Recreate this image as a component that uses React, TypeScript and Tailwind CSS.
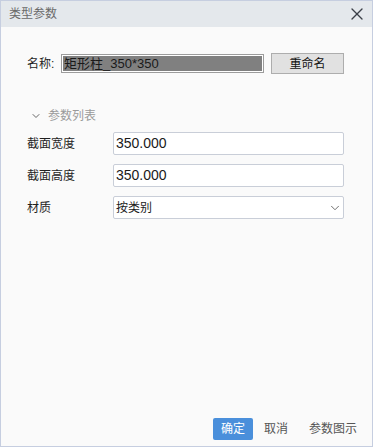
import { ChevronDown, X } from 'lucide-react';

const font = { fontFamily: '"Liberation Sans", "Noto Sans CJK SC", sans-serif' };

function ParamRow({ label, children }: { label: string; children: React.ReactNode }) {
  return (
    <div className="flex items-center h-[23px]">
      <span className="w-[86px] text-[12px] text-[#1f1f1f]">{label}</span>
      {children}
    </div>
  );
}

export default function App() {
  return (
    <div
      className="w-[373px] h-[447px] border border-[#c6cee0] bg-[#fafafa] flex flex-col"
      style={font}
    >
      <div className="h-[26px] bg-[#e4e8ec] flex items-center justify-between pl-[8px] pr-[5px]">
        <span className="text-[12px] text-[#6a6a6a]">类型参数</span>
        <X className="w-[20px] h-[20px] text-[#3a3f47]" strokeWidth={1.6} />
      </div>

      <div className="flex-1 flex flex-col pl-[26px] pr-[28px] pt-[26px]">
        <div className="flex items-center h-[21px]">
          <span className="w-[34px] text-[12px] text-[#1f1f1f]">名称:</span>
          <div className="w-[203px] h-[19px] border border-[#9c9c9c] bg-white p-px">
            <div className="h-full bg-[#808080] text-[13px] leading-[15px] text-[#1a1a1a] pl-[1px]">
              矩形柱_350*350
            </div>
          </div>
          <button className="ml-[7px] w-[73px] h-[21px] border border-[#adadad] bg-[#e1e1e1] text-[12px] text-[#111]">
            重命名
          </button>
        </div>

        <div className="flex items-center mt-[35px] h-[14px] pl-[3px] gap-[6px]">
          <ChevronDown className="w-[12px] h-[12px] text-[#666]" strokeWidth={2} />
          <span className="text-[12px] text-[#9a9a9a]">参数列表</span>
        </div>

        <div className="flex flex-col gap-[9px] mt-[9px]">
          <ParamRow label="截面宽度">
            <div className="flex-1 h-full border border-[#c9ced8] rounded-[2px] bg-white text-[14px] text-[#1a1a1a] pl-[2px] flex items-center">
              350.000
            </div>
          </ParamRow>
          <ParamRow label="截面高度">
            <div className="flex-1 h-full border border-[#c9ced8] rounded-[2px] bg-white text-[14px] text-[#1a1a1a] pl-[2px] flex items-center">
              350.000
            </div>
          </ParamRow>
          <ParamRow label="材质">
            <div className="flex-1 h-full border border-[#c9ced8] rounded-[2px] bg-white text-[12px] text-[#1a1a1a] pl-[2px] pr-[1px] flex items-center justify-between">
              <span>按类别</span>
              <ChevronDown className="w-[14px] h-[14px] text-[#666]" strokeWidth={1.6} />
            </div>
          </ParamRow>
        </div>

        <div className="flex-1" />

        <div className="flex justify-end items-center gap-[3px] mb-[6px] mr-[-21px]">
          <button className="h-[22px] px-[8px] rounded-[2px] bg-[#4a8fdb] text-white text-[12px]">确定</button>
          <button className="h-[22px] px-[8px] text-[12px] text-[#555]">取消</button>
          <button className="ml-[2px] h-[22px] px-[8px] text-[12px] text-[#555]">参数图示</button>
        </div>
      </div>
    </div>
  );
}
